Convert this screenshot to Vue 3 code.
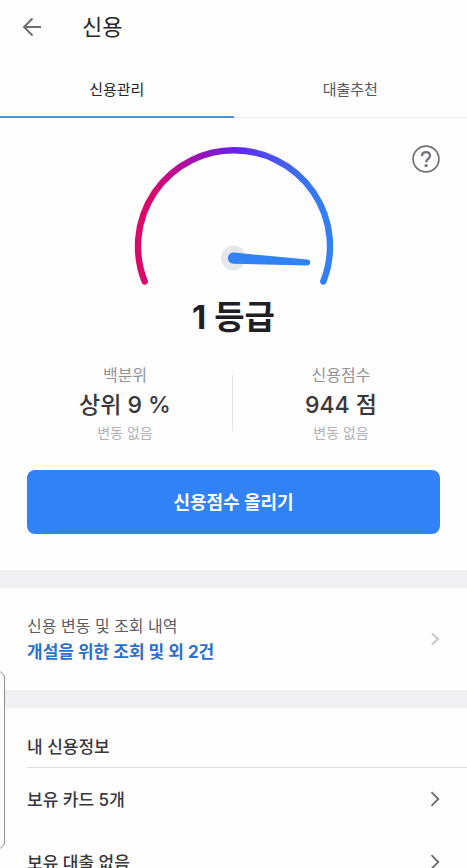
<script setup>
import { ref } from 'vue'

const tabs = ['신용관리', '대출추천']
const activeTab = ref(0)

const stats = [
  { label: '백분위', value: '상위 9 %', change: '변동 없음' },
  { label: '신용점수', value: '944 점', change: '변동 없음' },
]

const infoRows = ['보유 카드 5개', '보유 대출 없음']
</script>

<template>
  <div class="page">
    <header class="header">
      <button class="icon-button" type="button" aria-label="뒤로">
        <svg width="20" height="20" viewBox="0 0 20 20" fill="none" stroke="#6f6f73" stroke-width="2">
          <path d="M19 10H2.500M10.500 1.500L2 10l8.500 8.500" />
        </svg>
      </button>
      <h1 class="title">신용</h1>
    </header>

    <nav class="tabs">
      <button
        v-for="(tab, i) in tabs"
        :key="tab"
        type="button"
        class="tab"
        :class="{ active: activeTab === i }"
        @click="activeTab = i"
      >{{ tab }}</button>
    </nav>

    <main>
      <section class="score">
        <button class="icon-button help" type="button" aria-label="도움말">
          <svg width="28" height="28" viewBox="0 0 28 28" fill="none" stroke="#707076">
            <circle cx="14" cy="14" r="12.900" stroke-width="1.700" />
            <path d="M10 11.200C10 8.600 11.700 7.200 14 7.200s4 1.400 4 3.600c0 3-3.900 3.200-3.900 6.500" stroke-width="2.200" />
            <circle cx="14.100" cy="20.600" r="1.600" fill="#707076" stroke="none" />
          </svg>
        </button>

        <svg class="gauge" width="200" height="142" viewBox="0 0 200 142" fill="none" aria-hidden="true">
          <defs>
            <linearGradient id="arc" gradientUnits="userSpaceOnUse" x1="1" y1="0" x2="199" y2="0">
              <stop offset="0" stop-color="#dc0868" />
              <stop offset="0.100" stop-color="#d60a70" />
              <stop offset="0.220" stop-color="#b80f98" />
              <stop offset="0.370" stop-color="#8c17c4" />
              <stop offset="0.500" stop-color="#6420ec" />
              <stop offset="0.640" stop-color="#5045f0" />
              <stop offset="0.850" stop-color="#3b72ee" />
              <stop offset="1" stop-color="#3182f5" />
            </linearGradient>
          </defs>
          <path d="M10.700 135.500A96 96 0 1 1 189.300 135.500" stroke="url(#arc)" stroke-width="6.400" stroke-linecap="round" />
          <circle cx="99.500" cy="112" r="12.300" fill="#e5e6ec" />
          <path d="M99.800 106.600L173.400 113.400A3 3 0 0 1 173 119.400L99.200 117.800A5.600 5.600 0 0 1 99.800 106.600Z" fill="#3182f5" />
        </svg>

        <h2 class="grade">1 등급</h2>

        <div class="stats">
          <div v-for="stat in stats" :key="stat.label" class="stat">
            <span class="stat-label">{{ stat.label }}</span>
            <strong class="stat-value">{{ stat.value }}</strong>
            <span class="stat-change">{{ stat.change }}</span>
          </div>
        </div>

        <button class="primary" type="button">신용점수 올리기</button>
      </section>

      <section class="history">
        <a class="history-link" href="#">
          <span class="history-text">
            <span class="history-label">신용 변동 및 조회 내역</span>
            <strong class="history-value">개설을 위한 조회 및 외 2건</strong>
          </span>
          <svg width="10" height="16" viewBox="0 0 10 16" fill="none" stroke="#c6c6c8" stroke-width="2">
            <path d="M2 2.500L8 8l-6 5.500" />
          </svg>
        </a>
      </section>

      <section class="info">
        <h2 class="info-title">내 신용정보</h2>
        <ul class="info-list">
          <li v-for="row in infoRows" :key="row">
            <a class="info-row" href="#">
              <span>{{ row }}</span>
              <svg width="10" height="16" viewBox="0 0 10 16" fill="none" stroke="#6c6c70" stroke-width="1.800">
                <path d="M1.500 1.200L8.300 8l-6.800 6.800" />
              </svg>
            </a>
          </li>
        </ul>
      </section>
    </main>

    <div class="edge-handle"></div>
  </div>
</template>

<style>
body {
  margin: 0;
  background: #fefefe;
}
</style>

<style scoped>
.page {
  position: relative;
  height: 100vh;
  overflow: hidden;
  background: #fefefe;
  color: #38383d;
  font-family: Inter, "Noto Sans CJK KR", sans-serif;
}

button {
  margin: 0;
  padding: 0;
  border: 0;
  background: none;
  font-family: inherit;
  cursor: pointer;
}

a {
  color: inherit;
  text-decoration: none;
}

h1,
h2,
ul {
  margin: 0;
  padding: 0;
  font-weight: 400;
  list-style: none;
}

svg {
  display: block;
}

.header {
  display: flex;
  align-items: center;
  gap: 40px;
  height: 54px;
  padding: 0 22px;
}

.icon-button {
  flex: none;
}

.title {
  color: #26262a;
  font-size: 22px;
  line-height: 32px;
}

.tabs {
  display: flex;
  height: 64px;
}

.tab {
  flex: 1;
  padding: 10px 0 1px;
  border-bottom: 1px solid #ececee;
  color: #55555a;
  font-size: 15px;
  line-height: 24px;
}

.tab.active {
  padding-bottom: 0;
  border-bottom: 2px solid #5290d0;
  color: #26262a;
}

.score {
  position: relative;
  display: flex;
  flex-direction: column;
  align-items: center;
  padding: 28px 27px 36px;
}

.help {
  position: absolute;
  top: 27px;
  right: 27px;
}

.grade {
  margin-top: 5px;
  color: #202024;
  font-size: 33px;
  font-weight: 700;
  line-height: 48px;
}

.stats {
  display: flex;
  align-self: stretch;
  margin: 22px -9px 0 -10px;
}

.stat {
  position: relative;
  flex: 1;
  display: flex;
  flex-direction: column;
  align-items: center;
}

.stat + .stat::before {
  content: "";
  position: absolute;
  top: 12px;
  bottom: 12px;
  left: -1px;
  width: 1px;
  background: #e2e2e5;
}

.stat-label {
  color: #929297;
  font-size: 16px;
  line-height: 24px;
}

.stat-value {
  font-size: 23px;
  font-weight: 500;
  line-height: 36px;
}

.stat-change {
  color: #b2b2b6;
  font-size: 14px;
  line-height: 20px;
}

.primary {
  align-self: stretch;
  height: 64px;
  margin-top: 27px;
  padding-bottom: 2px;
  border-radius: 8px;
  background: #3182f6;
  color: #fff;
  font-size: 18px;
  font-weight: 700;
}

.history,
.info {
  border-top: 18px solid #f0f0f2;
}

.history-link {
  display: flex;
  align-items: center;
  justify-content: space-between;
  padding: 25px 27px;
}

.history-text {
  display: flex;
  flex-direction: column;
}

.history-label {
  color: #5c5c61;
  font-size: 16px;
  line-height: 26px;
}

.history-value {
  color: #2b70c9;
  font-size: 17px;
  font-weight: 700;
  line-height: 26px;
}

.info-title {
  margin-left: 27px;
  padding: 26px 0 7px;
  border-bottom: 1px solid #dedee0;
  font-size: 17px;
  font-weight: 500;
  line-height: 26px;
}

.info-row {
  display: flex;
  align-items: center;
  justify-content: space-between;
  box-sizing: border-box;
  height: 63px;
  padding: 0 27px 2px;
  font-size: 17px;
  font-weight: 500;
}

.edge-handle {
  position: absolute;
  top: 671px;
  left: -12px;
  box-sizing: border-box;
  width: 17px;
  height: 178px;
  border: 1px solid #8e8e92;
  border-radius: 7px;
  background: #fefefe;
}
</style>
